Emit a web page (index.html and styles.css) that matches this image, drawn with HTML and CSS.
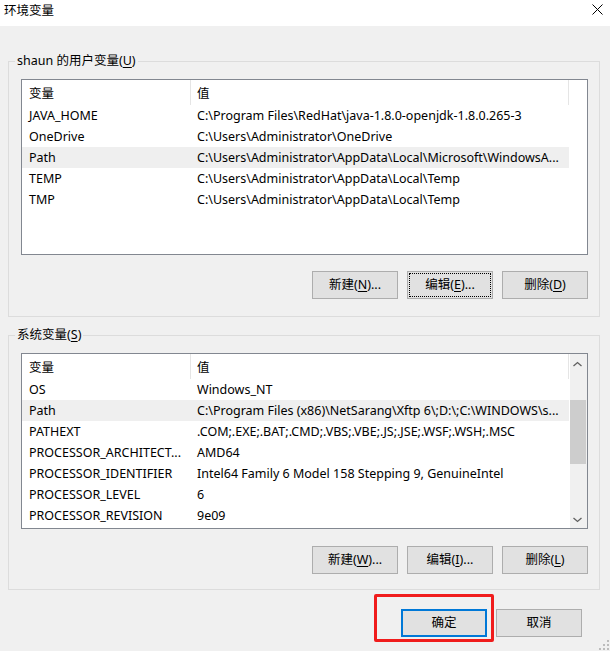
FILE: index.html
```html
<!DOCTYPE html>
<html lang="zh-CN">
<head>
<meta charset="utf-8">
<title>环境变量</title>
<link rel="stylesheet" href="styles.css">
</head>
<body>
<div class="window">
  <div class="titlebar">
    <span class="title">环境变量</span>
    <svg class="close" width="11" height="11" viewBox="0 0 11 11"><path d="M0.5 0.5 L10.5 10.5 M10.5 0.5 L0.5 10.5" stroke="#000" stroke-width="1" fill="none"/></svg>
  </div>
  <div class="client">
    <fieldset class="group group-user">
      <legend>shaun 的用户变量(<u>U</u>)</legend>
      <div class="listview">
        <div class="lv-main">
          <div class="lv-header"><div class="h h1">变量</div><div class="h h2">值</div></div>
          <div class="row"><span class="c1">JAVA_HOME</span><span class="c2">C:\Program Files\RedHat\java-1.8.0-openjdk-1.8.0.265-3</span></div>
          <div class="row"><span class="c1">OneDrive</span><span class="c2">C:\Users\Administrator\OneDrive</span></div>
          <div class="row sel"><span class="c1">Path</span><span class="c2">C:\Users\Administrator\AppData\Local\Microsoft\WindowsA...</span></div>
          <div class="row"><span class="c1">TEMP</span><span class="c2">C:\Users\Administrator\AppData\Local\Temp</span></div>
          <div class="row"><span class="c1">TMP</span><span class="c2">C:\Users\Administrator\AppData\Local\Temp</span></div>
        </div>
      </div>
      <div class="btnrow">
        <button class="btn">新建(<u>N</u>)...</button>
        <button class="btn focus">编辑(<u>E</u>)...</button>
        <button class="btn">删除(<u>D</u>)</button>
      </div>
    </fieldset>

    <fieldset class="group group-sys">
      <legend>系统变量(<u>S</u>)</legend>
      <div class="listview">
        <div class="lv-main">
          <div class="lv-header"><div class="h h1">变量</div><div class="h h2">值</div></div>
          <div class="row"><span class="c1">OS</span><span class="c2">Windows_NT</span></div>
          <div class="row sel"><span class="c1">Path</span><span class="c2">C:\Program Files (x86)\NetSarang\Xftp 6\;D:\;C:\WINDOWS\s...</span></div>
          <div class="row"><span class="c1">PATHEXT</span><span class="c2">.COM;.EXE;.BAT;.CMD;.VBS;.VBE;.JS;.JSE;.WSF;.WSH;.MSC</span></div>
          <div class="row"><span class="c1">PROCESSOR_ARCHITECT...</span><span class="c2">AMD64</span></div>
          <div class="row"><span class="c1">PROCESSOR_IDENTIFIER</span><span class="c2">Intel64 Family 6 Model 158 Stepping 9, GenuineIntel</span></div>
          <div class="row"><span class="c1">PROCESSOR_LEVEL</span><span class="c2">6</span></div>
          <div class="row"><span class="c1">PROCESSOR_REVISION</span><span class="c2">9e09</span></div>
        </div>
        <div class="scrollbar">
          <div class="sb-btn"><svg width="17" height="17" viewBox="0 0 17 17"><polyline points="3.5,12 7.5,8.5 11.5,12" fill="none" stroke="#606060" stroke-width="1.3"/></svg></div>
          <div class="sb-track"><div class="sb-thumb"></div></div>
          <div class="sb-btn"><svg width="17" height="17" viewBox="0 0 17 17"><polyline points="3.5,7 7.5,10.5 11.5,7" fill="none" stroke="#606060" stroke-width="1.3"/></svg></div>
        </div>
      </div>
      <div class="btnrow">
        <button class="btn">新建(<u>W</u>)...</button>
        <button class="btn">编辑(<u>I</u>)...</button>
        <button class="btn">删除(<u>L</u>)</button>
      </div>
    </fieldset>

    <div class="dialog-buttons">
      <div class="ok-wrap">
        <button class="btn default">确定</button>
        <div class="highlight-box"></div>
      </div>
      <button class="btn">取消</button>
    </div>
    <svg class="grip" width="10" height="10" viewBox="0 0 10 10">
      <rect x="8" y="0" width="2" height="2" fill="#bcbcbc"/>
      <rect x="4" y="4" width="2" height="2" fill="#bcbcbc"/>
      <rect x="8" y="4" width="2" height="2" fill="#bcbcbc"/>
      <rect x="0" y="8" width="2" height="2" fill="#bcbcbc"/>
      <rect x="4" y="8" width="2" height="2" fill="#bcbcbc"/>
      <rect x="8" y="8" width="2" height="2" fill="#bcbcbc"/>
    </svg>
  </div>
</div>
</body>
</html>
```
FILE: styles.css
```css
* { box-sizing: border-box; }
html, body { margin: 0; padding: 0; }
body {
  width: 610px;
  height: 651px;
  overflow: hidden;
  font-family: "Noto Sans", "Noto Sans CJK SC", sans-serif;
  font-size: 12.5px;
  line-height: 16px;
  color: #000;
  background: #f0f0f0;
}
u { text-decoration: underline; text-underline-offset: 2px; }

.window {
  width: 610px;
  height: 651px;
  display: flex;
  flex-direction: column;
}

.titlebar {
  height: 26px;
  background: #fff;
  display: flex;
  justify-content: space-between;
  align-items: flex-start;
  padding: 3px 7px 0 4px;
}
.title { line-height: 16px; }
.close { margin-top: 1px; }

.client {
  flex: 1;
  position: relative;
  background: #f0f0f0;
  display: flex;
  flex-direction: column;
}

.group {
  margin: 0 10px 0 8px;
  border: 1px solid #dcdcdc;
  padding: 10px 11px 17px 12px;
  min-width: 0;
}
.group-user { margin-top: 27px; }
.group-sys { margin-top: 10px; padding-bottom: 15px; }
.group legend {
  padding: 0 2px;
  margin-left: -6px;
  line-height: 16px;
}

.listview {
  width: 567px;
  height: 176px;
  border: 1px solid #828790;
  background: #fff;
  display: flex;
}
.lv-main { flex: 1; min-width: 0; }

.lv-header {
  display: flex;
  height: 25px;
}
.h {
  height: 25px;
  padding-top: 2px;
  line-height: 23px;
  border-right: 1px solid #e5e5e5;
  white-space: nowrap;
}
.h1 { width: 169px; padding-left: 7px; }
.h2 { width: 378px; padding-left: 6px; }

.row {
  display: flex;
  width: 547px;
  height: 21px;
  padding-top: 1px;
  line-height: 20px;
  white-space: nowrap;
}
.row.sel { background: #efefef; }
.c1 { width: 169px; padding-left: 7px; overflow: hidden; }
.c2 { flex: 1; padding-left: 6px; overflow: hidden; }

.scrollbar {
  width: 17px;
  background: #f0f0f0;
  display: flex;
  flex-direction: column;
}
.sb-btn { height: 17px; }
.sb-btn svg { display: block; }
.sb-track { flex: 1; }
.sb-thumb {
  margin: 29px 1px 0 0;
  height: 64px;
  background: #cdcdcd;
}

.btnrow {
  display: flex;
  justify-content: flex-end;
  gap: 9px;
  margin-top: 16px;
}
.group-sys .btnrow { margin-top: 17px; }

.btn {
  width: 86px;
  height: 28px;
  padding: 0;
  margin: 0;
  font: inherit;
  line-height: 16px;
  color: #000;
  background: #e1e1e1;
  border: 1px solid #adadad;
  border-radius: 0;
}
.btn.focus {
  outline: 1px dotted #000;
  outline-offset: -3px;
}
.btn.default {
  border: 2px solid #0078d7;
}

.dialog-buttons {
  display: flex;
  justify-content: flex-end;
  gap: 9px;
  margin-top: 19px;
  padding-right: 28px;
}
.ok-wrap { position: relative; }
.highlight-box {
  position: absolute;
  left: -27px;
  top: -15px;
  width: 120px;
  height: 48px;
  border: 3px solid #f01c1c;
  border-radius: 2px;
  pointer-events: none;
}

.grip {
  position: absolute;
  right: 1px;
  bottom: 1px;
}
```
